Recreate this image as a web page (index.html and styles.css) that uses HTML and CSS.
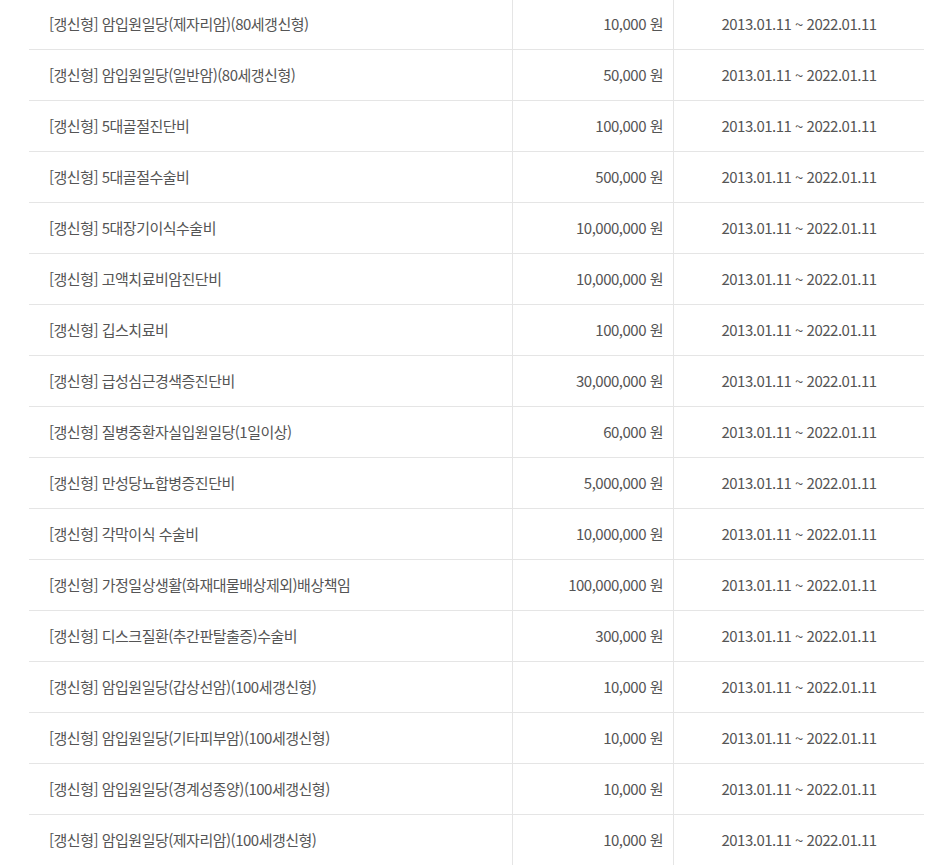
FILE: index.html
```html
<!DOCTYPE html>
<html lang="ko">
<head>
<meta charset="utf-8">
<link rel="stylesheet" href="styles.css">
</head>
<body>
<div class="list">
  <div class="row"><div class="name">[갱신형] 암입원일당(제자리암)(80세갱신형)</div><div class="amt">10,000 원</div><div class="period">2013.01.11 ~ 2022.01.11</div></div>
  <div class="row"><div class="name">[갱신형] 암입원일당(일반암)(80세갱신형)</div><div class="amt">50,000 원</div><div class="period">2013.01.11 ~ 2022.01.11</div></div>
  <div class="row"><div class="name">[갱신형] 5대골절진단비</div><div class="amt">100,000 원</div><div class="period">2013.01.11 ~ 2022.01.11</div></div>
  <div class="row"><div class="name">[갱신형] 5대골절수술비</div><div class="amt">500,000 원</div><div class="period">2013.01.11 ~ 2022.01.11</div></div>
  <div class="row"><div class="name">[갱신형] 5대장기이식수술비</div><div class="amt">10,000,000 원</div><div class="period">2013.01.11 ~ 2022.01.11</div></div>
  <div class="row"><div class="name">[갱신형] 고액치료비암진단비</div><div class="amt">10,000,000 원</div><div class="period">2013.01.11 ~ 2022.01.11</div></div>
  <div class="row"><div class="name">[갱신형] 깁스치료비</div><div class="amt">100,000 원</div><div class="period">2013.01.11 ~ 2022.01.11</div></div>
  <div class="row"><div class="name">[갱신형] 급성심근경색증진단비</div><div class="amt">30,000,000 원</div><div class="period">2013.01.11 ~ 2022.01.11</div></div>
  <div class="row"><div class="name">[갱신형] 질병중환자실입원일당(1일이상)</div><div class="amt">60,000 원</div><div class="period">2013.01.11 ~ 2022.01.11</div></div>
  <div class="row"><div class="name">[갱신형] 만성당뇨합병증진단비</div><div class="amt">5,000,000 원</div><div class="period">2013.01.11 ~ 2022.01.11</div></div>
  <div class="row"><div class="name">[갱신형] 각막이식 수술비</div><div class="amt">10,000,000 원</div><div class="period">2013.01.11 ~ 2022.01.11</div></div>
  <div class="row"><div class="name">[갱신형] 가정일상생활(화재대물배상제외)배상책임</div><div class="amt">100,000,000 원</div><div class="period">2013.01.11 ~ 2022.01.11</div></div>
  <div class="row"><div class="name">[갱신형] 디스크질환(추간판탈출증)수술비</div><div class="amt">300,000 원</div><div class="period">2013.01.11 ~ 2022.01.11</div></div>
  <div class="row"><div class="name">[갱신형] 암입원일당(갑상선암)(100세갱신형)</div><div class="amt">10,000 원</div><div class="period">2013.01.11 ~ 2022.01.11</div></div>
  <div class="row"><div class="name">[갱신형] 암입원일당(기타피부암)(100세갱신형)</div><div class="amt">10,000 원</div><div class="period">2013.01.11 ~ 2022.01.11</div></div>
  <div class="row"><div class="name">[갱신형] 암입원일당(경계성종양)(100세갱신형)</div><div class="amt">10,000 원</div><div class="period">2013.01.11 ~ 2022.01.11</div></div>
  <div class="row"><div class="name">[갱신형] 암입원일당(제자리암)(100세갱신형)</div><div class="amt">10,000 원</div><div class="period">2013.01.11 ~ 2022.01.11</div></div>
</div>
</body>
</html>
```
FILE: styles.css
```css
html, body {
  margin: 0;
  padding: 0;
  background: #fff;
}
body {
  font-family: "Noto Sans CJK KR", "Noto Sans", sans-serif;
  font-size: 15px;
  letter-spacing: -0.5px;
  color: #555;
  overflow: hidden;
}
.list {
  margin: -1px 0 0 29px;
  width: 895px;
}
.row {
  display: grid;
  grid-template-columns: 483px 161px 251px;
  height: 50px;
  border-bottom: 1px solid #e5e5e5;
}
.row > div {
  display: flex;
  align-items: center;
  white-space: nowrap;
  padding-bottom: 2px;
}
.name {
  padding-left: 20px;
}
.amt {
  border-left: 1px solid #e5e5e5;
  justify-content: flex-end;
  padding-right: 10px;
}
.period {
  border-left: 1px solid #e5e5e5;
  justify-content: center;
}
```
